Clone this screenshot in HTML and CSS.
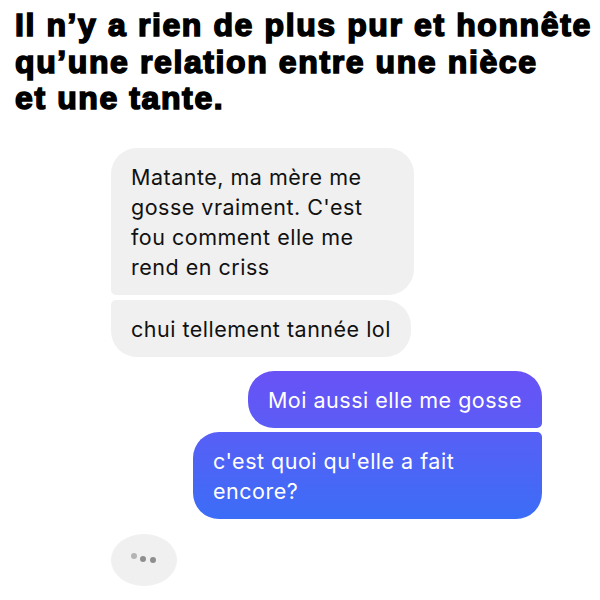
FILE: index.html
```html
<!DOCTYPE html>
<html lang="fr">
<head>
  <meta charset="UTF-8" />
  <title>Matante</title>
  <link rel="stylesheet" href="styles.css">
</head>
<body>

<h1 class="caption">Il n’y a rien de plus pur et honnête<br>qu’une relation entre une nièce<br>et une tante.</h1>

<div class="chat">
  <div class="bubble in first">Matante, ma mère me gosse vraiment. C'est fou comment elle me rend en criss</div>
  <div class="bubble in last">chui tellement tannée lol</div>

  <div class="bubble out first top-grad">Moi aussi elle me gosse</div>
  <div class="bubble out last bottom-grad">c'est quoi qu'elle a fait encore?</div>

  <div class="typing">
    <span class="dot one"></span>
    <span class="dot two"></span>
    <span class="dot"></span>
  </div>
</div>

</body>
</html>
```

FILE: styles.css
```css
body {
  margin: 0;
  background: #fff;
  font-family: Inter, "Noto Sans", sans-serif;
}
.caption {
  margin: 0;
  padding: 7px 0 0 15px;
  font-family: "Liberation Sans", Arial, sans-serif;
  font-weight: bold;
  font-size: 32px;
  line-height: 36.7px;
  letter-spacing: 1.6px;
  color: #000;
  -webkit-text-stroke: 1.6px #000;
  white-space: nowrap;
}
.chat {
  display: flex;
  flex-direction: column;
  padding: 31px 58px 0 111px;
}
.bubble {
  font-size: 21.5px;
  line-height: 30px;
  letter-spacing: 0.5px;
  padding: 13.5px 20px;
  border-radius: 26px;
  margin-bottom: 5px;
}
.in {
  align-self: flex-start;
  max-width: 263px;
  background: #f0f0f0;
  color: #111;
}
.in.first {
  border-bottom-left-radius: 5px;
}
.in.last {
  border-top-left-radius: 5px;
}
.in.last + .out {
  margin-top: 9px;
}
.out {
  align-self: flex-end;
  max-width: 309px;
  color: #fff;
}
.out.first {
  margin-bottom: 4px;
  border-bottom-right-radius: 5px;
}
.out.last {
  border-top-right-radius: 5px;
}
.top-grad {
  background: linear-gradient(#6952f6, #5b5cf6);
}
.bottom-grad {
  background: linear-gradient(#585ff6, #3b6df7);
}
.typing {
  display: flex;
  align-items: center;
  justify-content: center;
  gap: 3.5px;
  width: 66px;
  height: 52px;
  margin-top: 10px;
  padding-right: 2px;
  box-sizing: border-box;
  border-radius: 50%;
  background: #f0f0f0;
}
.dot {
  width: 6px;
  height: 6px;
  border-radius: 50%;
  background: #8e8e8e;
}
.dot.one {
  background: #b4b4b4;
  margin-top: -8px;
}
.dot.two {
  margin-top: -2px;
}
```
